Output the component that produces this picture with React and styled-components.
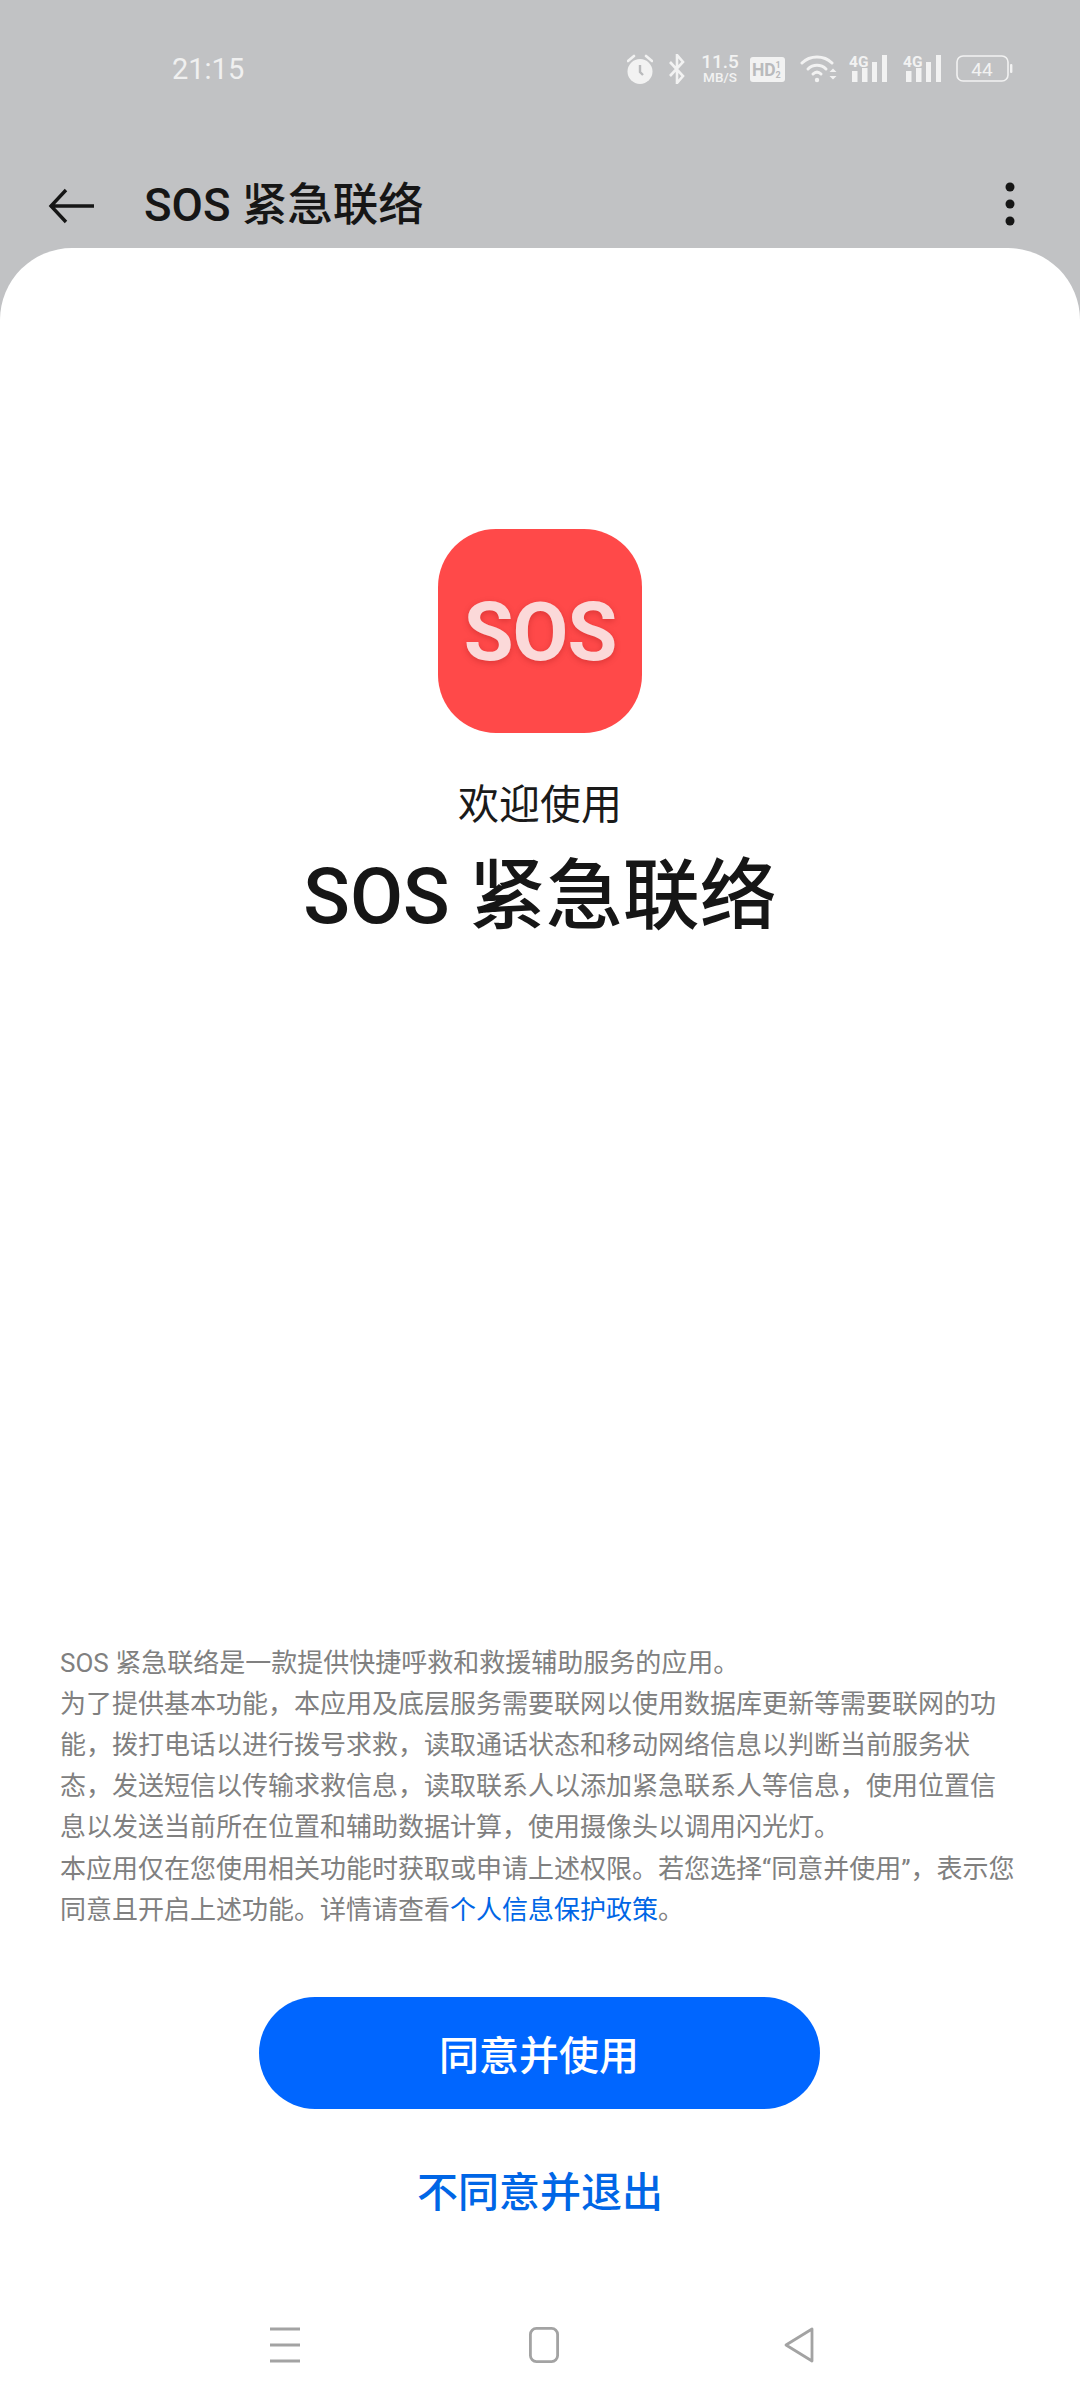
import React from "react";
import styled, { createGlobalStyle } from "styled-components";

const Global = createGlobalStyle`
  html, body { margin: 0; padding: 0; background: #c1c2c4; }
  * { box-sizing: border-box; }
`;
const FONT = `Roboto, "Noto Sans CJK SC", sans-serif`;

const Page = styled.div`
  width: 1080px; height: 2400px; display: flex; flex-direction: column;
  background: #c1c2c4; font-family: ${FONT}; overflow: hidden;
`;
const StatusBar = styled.div`
  height: 176px; flex: none; display: flex; align-items: flex-start;
  justify-content: space-between; padding: 50px 67px 0 172px;
`;
const Time = styled.div`
  font-size: 29px; line-height: 38px; color: #f0f0f0;
`;
const StatusIcons = styled.div`
  display: flex; align-items: center; height: 38px;
`;
const SpeedLabel = styled.div`
  width: 38px; display: flex; flex-direction: column; align-items: center;
  color: #f2f2f2; font-weight: 500;
`;
const SpeedValue = styled.span`
  font-size: 19px; line-height: 17px;
`;
const SpeedUnit = styled.span`
  font-size: 13.5px; line-height: 15px; white-space: nowrap;
`;
const Header = styled.div`
  height: 72px; flex: none; display: flex; align-items: flex-start;
  padding: 0 64px 0 48px;
`;
const BackBtn = styled.div`
  width: 96px; height: 60px; flex: none; display: flex; align-items: center;
`;
const HeaderTitle = styled.div`
  flex: 1; font-size: 45.5px; line-height: 60px; font-weight: 500; color: #161616;
`;
const MoreIcon = styled.svg`
  margin-top: 6px; flex: none;
`;
const Sheet = styled.div`
  flex: 1; display: flex; flex-direction: column; align-items: center;
  background: #fff; border-radius: 72px 72px 0 0; padding-top: 281px;
`;
const Logo = styled.div`
  width: 204px; height: 204px; border-radius: 58px; background: #ff4949;
  display: flex; align-items: center; justify-content: center; padding-top: 2px;
  font-size: 81px; font-weight: 700; color: #fbd9d9; letter-spacing: -1px;
  text-shadow: 0 2px 6px rgba(120, 0, 0, 0.25);
`;
const Welcome = styled.div`
  margin-top: 45px; font-size: 41px; line-height: 54px; color: #1a1a1a;
`;
const AppName = styled.div`
  margin-top: 11px; font-size: 77px; line-height: 108px; font-weight: 500; color: #161616;
`;
const Spacer = styled.div` flex: 1; `;
const Notice = styled.div`
  width: 960px; font-size: 26px; line-height: 41.2px; color: #808080;
  display: flex; flex-direction: column;
`;
const Link = styled.span` color: #0066e6; `;
const Agree = styled.div`
  margin: 66px 2px 0 0; width: 561px; height: 112px; border-radius: 56px; background: #0066ff;
  color: #fff; font-size: 40px; font-weight: 500; display: flex; align-items: center; justify-content: center;
`;
const Decline = styled.div`
  margin-top: 54px; font-size: 41px; line-height: 60px; font-weight: 500; color: #0066e6;
`;
const NavBar = styled.div`
  margin-top: 104px; height: 73px; width: 100%; display: flex; align-items: flex-start;
  justify-content: space-between; padding: 0 266px 0 270px;
`;
const NavHome = styled.svg`
  margin-left: 3px;
`;

const Alarm = () => (
  <svg width="26" height="30" viewBox="0 0 26 30" fill="none">
    <circle cx="13" cy="17.500" r="12.500" fill="#f2f2f2" />
    <path d="M13 11v7l3 3" stroke="#b9babc" strokeWidth="2.400" fill="none" />
    <path d="M1 7l6-5M25 7l-6-5" stroke="#f2f2f2" strokeWidth="2.600" strokeLinecap="round" />
  </svg>
);
const Bluetooth = () => (
  <svg width="16" height="30" viewBox="0 0 16 30" fill="none" stroke="#f2f2f2" strokeWidth="2.600">
    <path d="M1 8l13 14-6 7V1l6 7L1 22" />
  </svg>
);
const Speed = () => (
  <SpeedLabel>
    <SpeedValue>11.5</SpeedValue>
    <SpeedUnit>MB/S</SpeedUnit>
  </SpeedLabel>
);
const Hd = () => (
  <svg width="35" height="25" viewBox="0 0 35 25">
    <rect width="35" height="25" rx="3" fill="#f2f2f2" />
    <text x="2" y="19" fontFamily="Roboto" fontSize="17.500" fontWeight="700" fill="#b9babc">HD</text>
    <text x="25.500" y="10.500" fontFamily="Roboto" fontSize="9" fontWeight="700" fill="#b9babc">1</text>
    <text x="25.500" y="21" fontFamily="Roboto" fontSize="9" fontWeight="700" fill="#b9babc">2</text>
  </svg>
);
const Wifi = () => (
  <svg width="37" height="30" viewBox="0 0 37 30" fill="none" stroke="#f2f2f2" strokeWidth="3" strokeLinecap="round">
    <path d="M2 9c8-8 22-8 30 0" />
    <path d="M8 15c5-5 13-5 18 0" />
    <path d="M13 20c2.500-2.500 5.500-2.500 8 0" />
    <circle cx="17" cy="26" r="2.200" fill="#f2f2f2" stroke="none" />
    <path d="M29.500 18l3.500-3.500 3.500 3.500zM29.500 22l3.500 3.500 3.500-3.500z" fill="#f2f2f2" stroke="none" />
  </svg>
);
const Signal = () => (
  <svg width="39" height="30" viewBox="0 0 39 30">
    <text x="0" y="13" fontFamily="Roboto" fontSize="15.500" fontWeight="700" fill="#f2f2f2">4G</text>
    <rect x="3" y="17" width="5.500" height="11" fill="#f2f2f2" />
    <rect x="13" y="14" width="5.500" height="14" fill="#f2f2f2" />
    <rect x="23" y="8" width="5" height="20" fill="#f2f2f2" />
    <rect x="33" y="1" width="5" height="27" fill="#f2f2f2" />
  </svg>
);
const Battery = () => (
  <svg width="57" height="28" viewBox="0 0 57 28">
    <rect x="1" y="1" width="51" height="25" rx="6" fill="none" stroke="#f2f2f2" strokeWidth="1.600" />
    <rect x="54" y="9" width="2.400" height="9" rx="1" fill="#f2f2f2" />
    <text x="26" y="20.500" textAnchor="middle" fontFamily="Roboto" fontSize="19" fill="#f2f2f2">44</text>
  </svg>
);
const IconGap = styled.span` display: inline-block; width: ${(p) => p.$w}px; `;

export default function App() {
  return (
    <Page>
      <Global />
      <StatusBar>
        <Time>21:15</Time>
        <StatusIcons>
          <Alarm /><IconGap $w={16} /><Bluetooth /><IconGap $w={16} /><Speed /><IconGap $w={11} />
          <Hd /><IconGap $w={15} /><Wifi /><IconGap $w={12} /><Signal /><IconGap $w={15} />
          <Signal /><IconGap $w={14} /><Battery />
        </StatusIcons>
      </StatusBar>
      <Header>
        <BackBtn>
          <svg width="46" height="36" viewBox="0 0 46 36" fill="none" stroke="#161616" strokeWidth="3.400">
            <path d="M2 18h44M18 2L3 18l15 16" />
          </svg>
        </BackBtn>
        <HeaderTitle>SOS 紧急联络</HeaderTitle>
        <MoreIcon width="12" height="44" viewBox="0 0 12 44" fill="#161616">
          <circle cx="6" cy="5" r="4.500" /><circle cx="6" cy="22" r="4.500" /><circle cx="6" cy="39" r="4.500" />
        </MoreIcon>
      </Header>
      <Sheet>
        <Logo>SOS</Logo>
        <Welcome>欢迎使用</Welcome>
        <AppName>SOS 紧急联络</AppName>
        <Spacer />
        <Notice>
          <div>SOS 紧急联络是一款提供快捷呼救和救援辅助服务的应用。</div>
          <div>为了提供基本功能，本应用及底层服务需要联网以使用数据库更新等需要联网的功能，拨打电话以进行拨号求救，读取通话状态和移动网络信息以判断当前服务状态，发送短信以传输求救信息，读取联系人以添加紧急联系人等信息，使用位置信息以发送当前所在位置和辅助数据计算，使用摄像头以调用闪光灯。</div>
          <div>本应用仅在您使用相关功能时获取或申请上述权限。若您选择“同意并使用”，表示您同意且开启上述功能。详情请查看<Link>个人信息保护政策</Link>。</div>
        </Notice>
        <Agree>同意并使用</Agree>
        <Decline>不同意并退出</Decline>
        <NavBar>
          <svg width="30" height="36" viewBox="0 0 30 36" stroke="#a3a3a3" strokeWidth="3">
            <path d="M0 2h30M0 18h30M0 34h30" />
          </svg>
          <NavHome width="30" height="36" viewBox="0 0 30 36" fill="none" stroke="#a3a3a3" strokeWidth="2.800">
            <rect x="1.400" y="1.400" width="27.200" height="33.200" rx="6" />
          </NavHome>
          <svg width="30" height="36" viewBox="0 0 30 36" fill="none" stroke="#a3a3a3" strokeWidth="2.800" strokeLinejoin="round">
            <path d="M28 2V34L2 18z" />
          </svg>
        </NavBar>
      </Sheet>
    </Page>
  );
}
